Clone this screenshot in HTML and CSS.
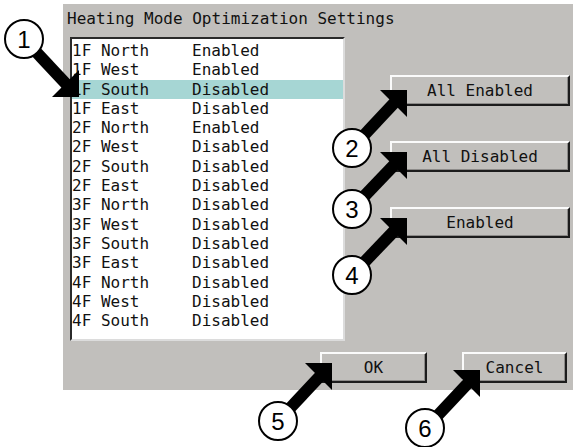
FILE: index.html
```html
<!DOCTYPE html>
<html lang="en">
<head>
  <meta charset="UTF-8">
  <title>Heating Mode Optimization Settings</title>
  <link rel="stylesheet" href="styles.css">
</head>
<body>
  <!-- Dialog window -->
  <div class="dialog">
    <div class="title">Heating Mode Optimization Settings</div>
    <div class="body">
      <div class="listbox">
        <div class="row"><span class="loc">1F North</span><span>Enabled</span></div>
        <div class="row"><span class="loc">1F West</span><span>Enabled</span></div>
        <div class="row selected"><span class="loc">1F South</span><span>Disabled</span></div>
        <div class="row"><span class="loc">1F East</span><span>Disabled</span></div>
        <div class="row"><span class="loc">2F North</span><span>Enabled</span></div>
        <div class="row"><span class="loc">2F West</span><span>Disabled</span></div>
        <div class="row"><span class="loc">2F South</span><span>Disabled</span></div>
        <div class="row"><span class="loc">2F East</span><span>Disabled</span></div>
        <div class="row"><span class="loc">3F North</span><span>Disabled</span></div>
        <div class="row"><span class="loc">3F West</span><span>Disabled</span></div>
        <div class="row"><span class="loc">3F South</span><span>Disabled</span></div>
        <div class="row"><span class="loc">3F East</span><span>Disabled</span></div>
        <div class="row"><span class="loc">4F North</span><span>Disabled</span></div>
        <div class="row"><span class="loc">4F West</span><span>Disabled</span></div>
        <div class="row"><span class="loc">4F South</span><span>Disabled</span></div>
      </div>
      <div class="side">
        <button class="btn btn-wide">All Enabled</button>
        <button class="btn btn-wide">All Disabled</button>
        <button class="btn btn-wide">Enabled</button>
      </div>
    </div>
    <div class="footer">
      <button class="btn btn-ok">OK</button>
      <button class="btn btn-cancel">Cancel</button>
    </div>
  </div>

  <!-- Numbered callouts drawn over the screenshot -->
  <svg class="callouts" width="573" height="447" viewBox="0 0 573 447">
    <g class="arrow">
      <line x1="24" y1="39" x2="68" y2="86"/>
      <polygon points="79,97 52,97 79,70"/>
      <line x1="352" y1="148" x2="396" y2="101"/>
      <polygon points="407,90 380,90 407,117"/>
      <line x1="352" y1="209" x2="396" y2="163"/>
      <polygon points="407,152 380,152 407,179"/>
      <line x1="352" y1="275" x2="396" y2="229"/>
      <polygon points="407,218 380,218 407,245"/>
      <line x1="278" y1="421" x2="322" y2="374"/>
      <polygon points="332,363 305,363 332,390"/>
      <line x1="425" y1="429" x2="470" y2="381"/>
      <polygon points="480,370 453,370 480,397"/>
    </g>
    <g class="badge">
      <circle cx="24" cy="39" r="19"/>
      <text x="24" y="48">1</text>
      <circle cx="352" cy="148" r="19"/>
      <text x="352" y="157">2</text>
      <circle cx="352" cy="209" r="19"/>
      <text x="352" y="218">3</text>
      <circle cx="352" cy="275" r="19"/>
      <text x="352" y="284">4</text>
      <circle cx="278" cy="421" r="19"/>
      <text x="278" y="430">5</text>
      <circle cx="425" cy="428" r="19"/>
      <text x="425" y="437">6</text>
    </g>
  </svg>
</body>
</html>
```

FILE: styles.css
```css
/* Basic page */
body {
  margin: 0;
  width: 573px;
  height: 447px;
  position: relative;
  background: #fff;
  font-family: "DejaVu Sans Mono", "Liberation Mono", monospace;
  font-size: 16px;
  color: #111;
}

/* Gray dialog window */
.dialog {
  box-sizing: border-box;
  width: 510px;
  height: 386px;
  margin: 4px 0 0 63px;
  padding: 6px 0 0 4px;
  background: #c1bfbc;
}
.title {
  line-height: 18px;
  height: 18px;
  white-space: pre;
}
.body {
  display: flex;
  margin-top: 9px;
}

/* List of zones */
.listbox {
  box-sizing: border-box;
  width: 275px;
  height: 304px;
  margin-left: 3px;
  padding-top: 2px;
  background: #fff;
  border: 2px solid;
  border-color: #2a2a2a #dcdcdc #dcdcdc #2a2a2a;
}
.row {
  height: 19.3px;
  line-height: 19.3px;
  white-space: pre;
}
.row.selected {
  background: #a6d6d4;
}
.loc {
  display: inline-block;
  width: 120px;
}

/* Buttons on the right */
.side {
  display: flex;
  flex-direction: column;
  gap: 35px;
  margin-left: 45px;
  padding-top: 38px;
}
.btn {
  box-sizing: border-box;
  height: 31px;
  padding: 0;
  font: inherit;
  color: #111;
  background: #c1bfbc;
  border: 2px solid;
  border-color: #fbfbfb #1c1c1c #1c1c1c #fbfbfb;
  box-shadow: inset -1px -1px 0 #8c8a88;
  white-space: pre;
}
.btn-wide {
  width: 180px;
}
.footer {
  display: flex;
  justify-content: flex-end;
  gap: 35px;
  margin-top: 11px;
  padding-right: 6px;
}
.btn-ok {
  width: 107px;
}
.btn-cancel {
  width: 105px;
}

/* Callout arrows and numbered circles */
.callouts {
  position: absolute;
  top: 0;
  left: 0;
  pointer-events: none;
}
.arrow line {
  stroke: #000;
  stroke-width: 12;
}
.arrow polygon {
  fill: #000;
}
.badge circle {
  fill: #fff;
  stroke: #000;
  stroke-width: 2;
}
.badge text {
  font-family: "Liberation Sans", Arial, sans-serif;
  font-size: 24px;
  text-anchor: middle;
  fill: #000;
}
```
